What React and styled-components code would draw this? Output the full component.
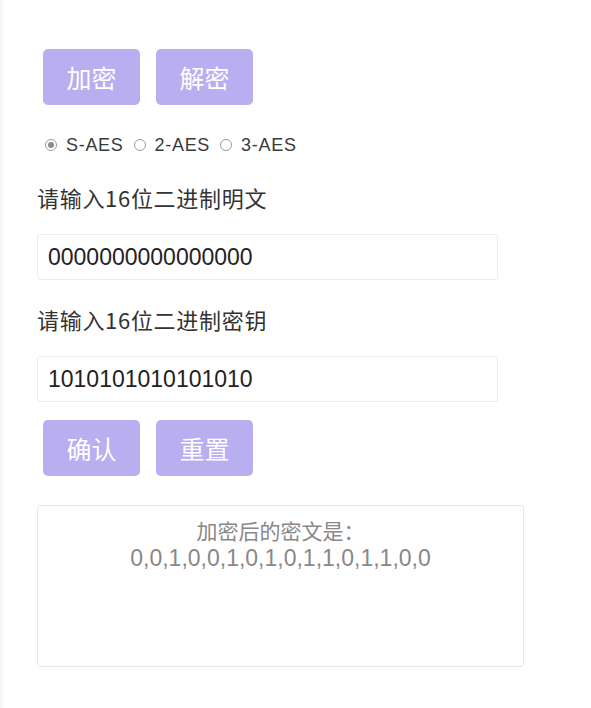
import React from "react"
import styled, { createGlobalStyle } from "styled-components"

const GlobalStyle = createGlobalStyle`
  body {
    margin: 0;
    background: #ffffff;
    font-family: "Liberation Sans", Arial, "Noto Sans CJK SC", sans-serif;
  }
`

const Page = styled.div`
  width: 591px;
  height: 708px;
  box-sizing: border-box;
  padding: 49px 0 0 37px;
  box-shadow: inset 3px 0 0 #f7f7f7;
`

const ButtonRow = styled.div`
  display: flex;
  gap: 16px;
  padding-left: 6px;
  margin-top: ${({ top }) => top || 0}px;
`

const Button = styled.button`
  width: 97px;
  height: 56px;
  border: none;
  border-radius: 5px;
  background: #b9aef0;
  color: #ffffff;
  font-size: 25px;
  font-family: "Noto Sans CJK SC", sans-serif;
  padding: 0;
`

const RadioRow = styled.div`
  display: flex;
  align-items: center;
  margin-top: 30px;
  padding-left: 8px;
  font-size: 18px;
  letter-spacing: 0.7px;
  color: #3a3a3a;
  height: 20px;
`

const Radio = styled.span`
  width: 12px;
  height: 12px;
  box-sizing: border-box;
  border-radius: 50%;
  border: 1px solid #9a9a9a;
  margin: 0 9px 0 ${({ first }) => (first ? 0 : 10)}px;
  display: inline-flex;
  align-items: center;
  justify-content: center;

  &::after {
    content: "";
    width: 6px;
    height: 6px;
    border-radius: 50%;
    background: ${({ checked }) => (checked ? "#8a8a8a" : "transparent")};
  }
`

const Label = styled.div`
  font-size: 22px;
  letter-spacing: 0.7px;
  color: #333;
  font-family: "Noto Sans CJK SC", sans-serif;
  line-height: 30px;
  margin-top: ${({ top }) => top}px;
`

const Input = styled.div`
  width: 461px;
  height: 46px;
  box-sizing: border-box;
  border: 1px solid #ececec;
  border-radius: 3px;
  padding-left: 10px;
  display: flex;
  align-items: center;
  font-size: 23px;
  color: #222;
  margin-top: ${({ top }) => top}px;
`

const Output = styled.div`
  width: 487px;
  height: 162px;
  box-sizing: border-box;
  border: 1px solid #e8e8e8;
  border-radius: 3px;
  margin-top: 29px;
  padding-top: 10px;
  text-align: center;
  color: #888;
  font-size: 21px;
  font-family: "Noto Sans CJK SC", sans-serif;
`

const Line = styled.div`
  line-height: 29px;
`

const Digits = styled.div`
  font-family: "Liberation Sans", Arial, sans-serif;
  font-size: 23px;
  line-height: 26px;
`

export default function App() {
  return (
    <Page>
      <GlobalStyle />
      <ButtonRow>
        <Button>加密</Button>
        <Button>解密</Button>
      </ButtonRow>
      <RadioRow>
        <Radio first checked />S-AES
        <Radio />2-AES
        <Radio />3-AES
      </RadioRow>
      <Label top={27}>请输入16位二进制明文</Label>
      <Input top={22}>0000000000000000</Input>
      <Label top={24}>请输入16位二进制密钥</Label>
      <Input top={22}>1010101010101010</Input>
      <ButtonRow top={18}>
        <Button>确认</Button>
        <Button>重置</Button>
      </ButtonRow>
      <Output>
        <Line>加密后的密文是：</Line>
        <Digits>0,0,1,0,0,1,0,1,0,1,1,0,1,1,0,0</Digits>
      </Output>
    </Page>
  )
}
